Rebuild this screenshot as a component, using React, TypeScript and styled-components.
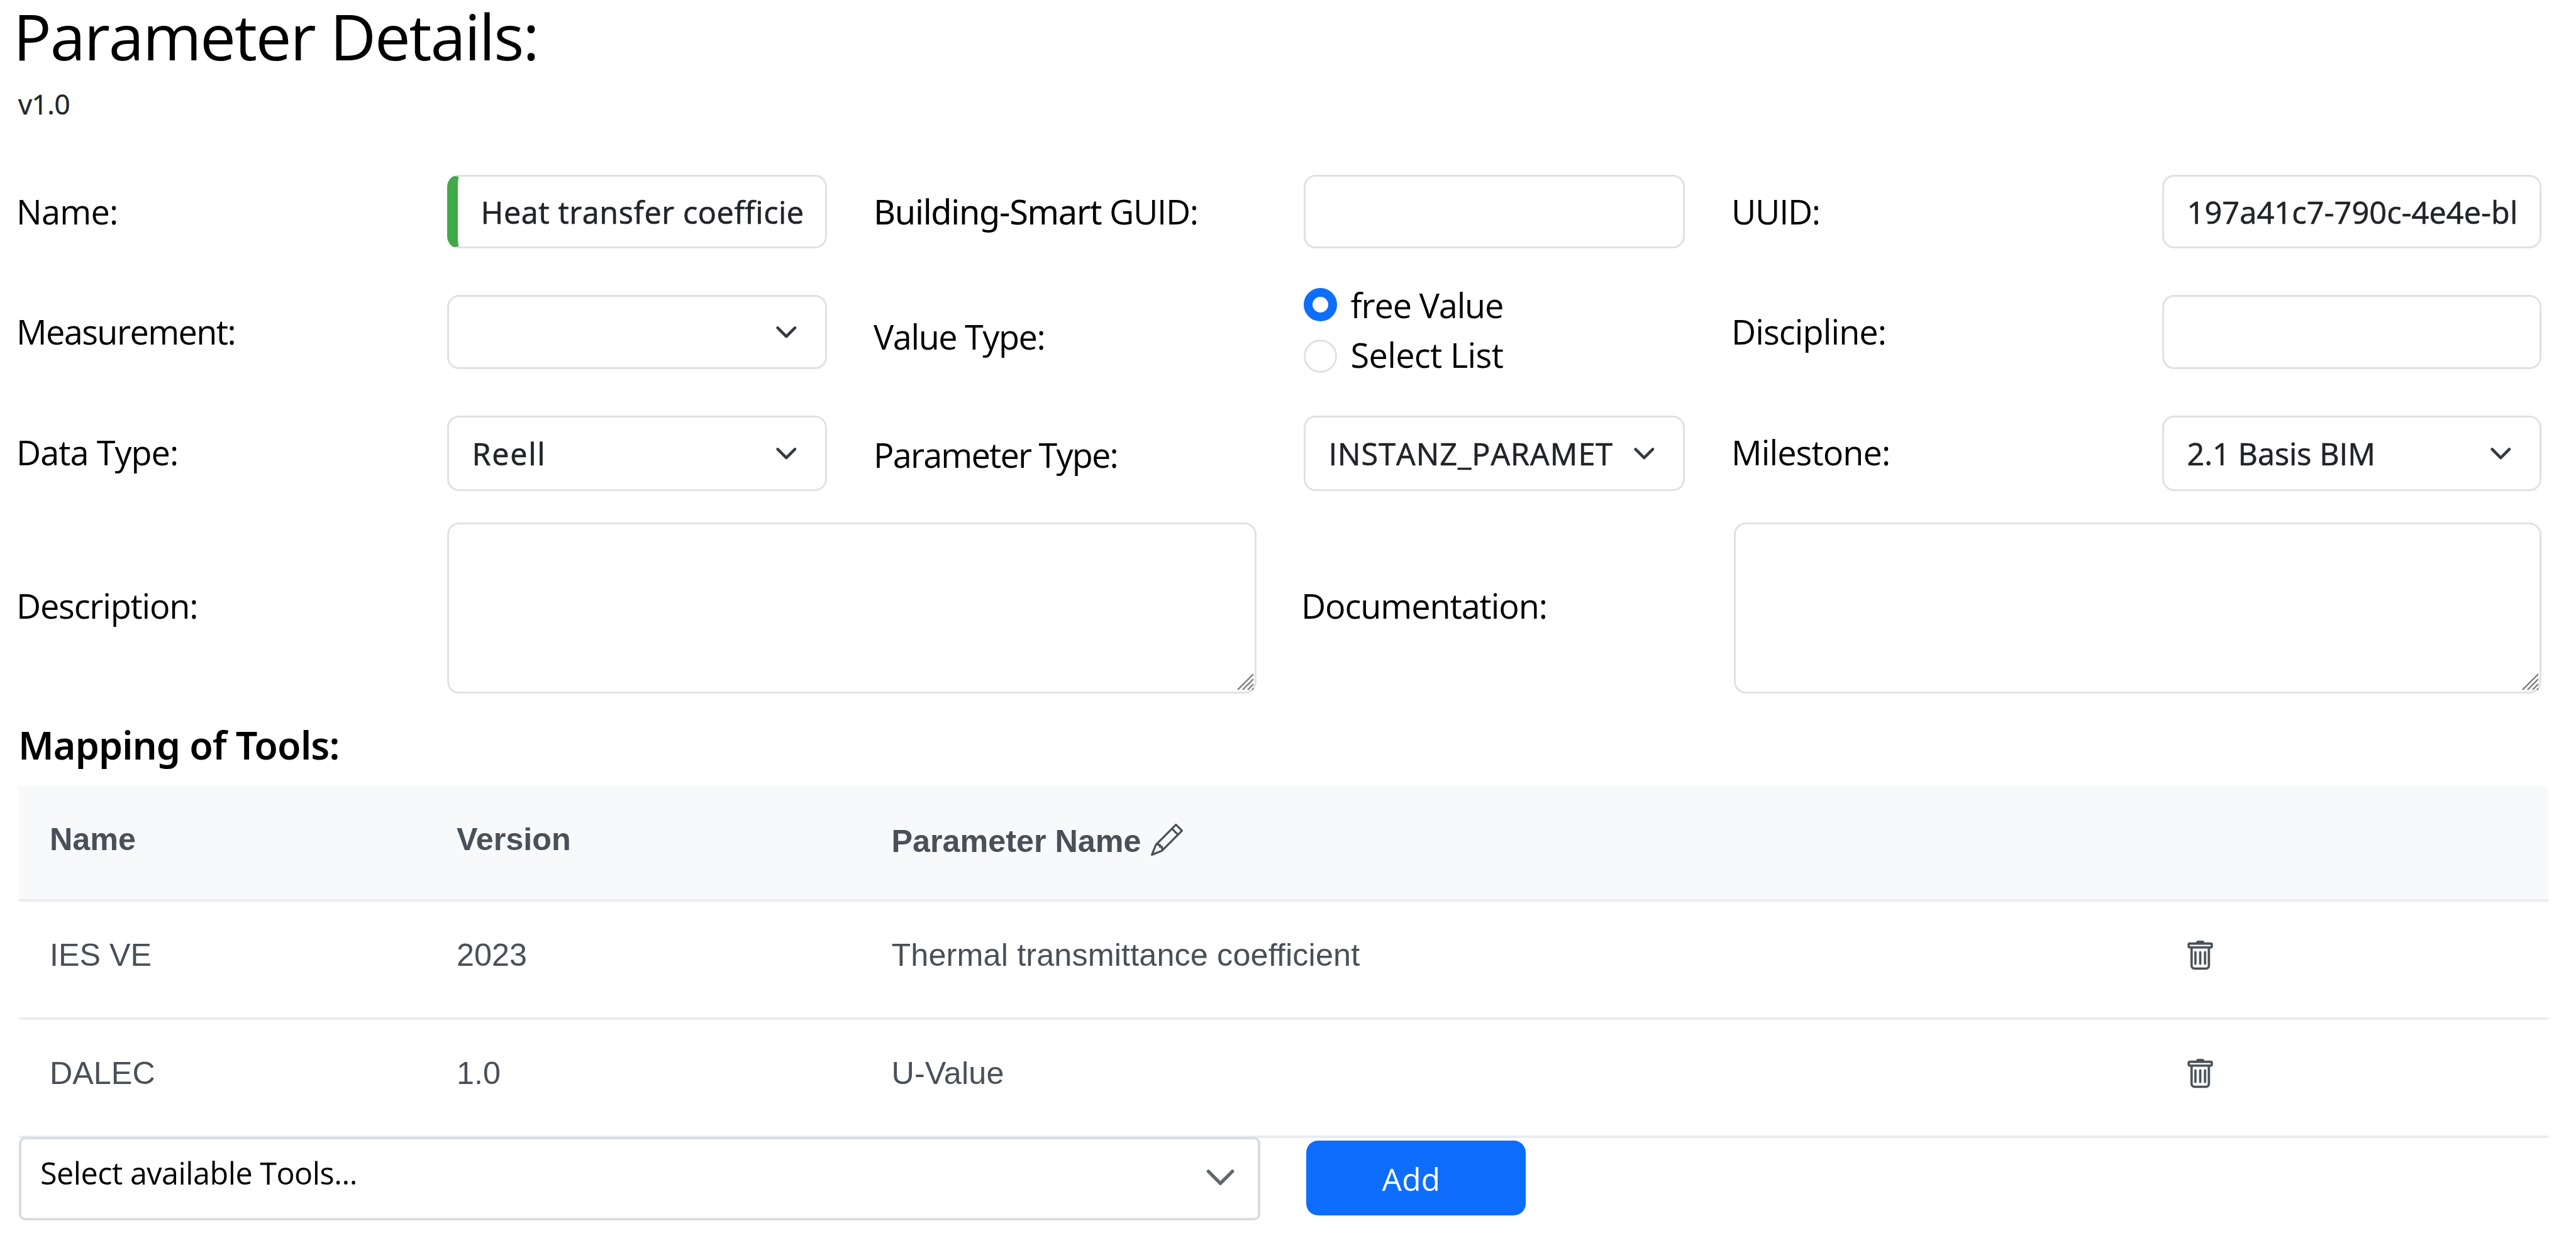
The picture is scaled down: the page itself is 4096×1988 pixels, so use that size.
import React from "react";
import styled, { createGlobalStyle } from "styled-components";
import { BsPencil, BsTrash } from "react-icons/bs";

const GlobalStyle = createGlobalStyle`
  * { box-sizing: border-box; }
  body { margin: 0; background: #fff; overflow: hidden; }
`;

const sans = `"Open Sans", "Noto Sans", sans-serif`;

const Page = styled.main`
  width: 4096px;
  height: 1988px;
  background: #fff;
  color: #000;
  font-family: ${sans};
  display: flex;
  flex-direction: column;
`;

const Header = styled.header`
  padding-left: 21px;
  height: 278px;
`;

const Title = styled.h1`
  margin: 0;
  font-size: 101px;
  font-weight: 400;
  line-height: 114px;
  letter-spacing: -2.1px;
  white-space: nowrap;
`;

const Version = styled.div`
  margin: 21px 0 0 8px;
  font-size: 44px;
  line-height: 60px;
  letter-spacing: -0.4px;
  color: #212529;
  -webkit-text-stroke: 0.5px currentColor;
`;

const Form = styled.form`
  display: flex;
  flex-direction: column;
`;

const FormRow = styled.div<{ $height: number; $gap: number; $wide?: boolean }>`
  display: grid;
  grid-template-columns: ${(p) =>
    p.$wide ? "685px 1287px 71px 688px 1284px" : "685px 604px 74px 684px 606px 74px 685px 603px"};
  grid-template-rows: 100%;
  height: ${(p) => p.$height}px;
  margin: 0 0 ${(p) => p.$gap}px 25.5px;
  align-items: stretch;
`;

const Spacer = styled.span``;

const Label = styled.label<{ $track: number; $drop?: number }>`
  display: flex;
  align-items: center;
  font-size: 54px;
  line-height: 72px;
  padding-bottom: ${(p) => Math.max(0, -(p.$drop ?? -2))}px;
  padding-top: ${(p) => Math.max(0, p.$drop ?? 0)}px;
  padding-left: 0.5px;
  letter-spacing: ${(p) => p.$track}px;
  white-space: nowrap;
`;

const RoundG = styled.span`
  font-family: "Noto Sans", sans-serif;
`;

const Field = styled.div<{ $track?: number; $valid?: boolean }>`
  display: flex;
  align-items: center;
  min-width: 0;
  border: 3px solid #dee2e6;
  border-radius: 19px;
  padding: 0 36px 0 37px;
  color: #212529;
  font-size: 48.5px;
  line-height: 72px;
  letter-spacing: ${(p) => p.$track ?? 0}px;
  -webkit-text-stroke: 0.7px currentColor;
  ${(p) => p.$valid && `border-left: 17px solid #42a948;`}
`;

const SelectField = styled(Field)`
  padding-right: 43px;
  justify-content: space-between;
`;

const Value = styled.span`
  overflow: hidden;
  white-space: nowrap;
`;

const TextArea = styled(Field)`
  align-items: flex-end;
  justify-content: flex-end;
  padding: 0 1px 2px 0;
`;

const Chevron = styled.svg<{ $size: number }>`
  flex: none;
  width: ${(p) => p.$size}px;
  height: ${(p) => p.$size}px;
`;

const Grip = styled.svg`
  width: 27px;
  height: 27px;
`;

const RadioGroup = styled.div`
  display: flex;
  flex-direction: column;
  margin-top: -24px;
`;

const RadioOption = styled.div`
  display: flex;
  align-items: center;
  flex: none;
  height: 79px;
`;

const Radio = styled.span<{ $checked?: boolean }>`
  width: 53px;
  height: 53px;
  flex: none;
  border-radius: 50%;
  margin: ${(p) => (p.$checked ? "0 22px 0 0" : "5px 22px 0 0")};
  border: ${(p) => (p.$checked ? "14px solid #0d6efd" : "3px solid #dee2e6")};
  background: #fff;
`;

const RadioLabel = styled.span<{ $track: number }>`
  font-size: 54px;
  line-height: 72px;
  letter-spacing: ${(p) => p.$track}px;
  white-space: nowrap;
`;

const SectionTitle = styled.h2`
  margin: 40px 0 23px 29px;
  font-family: "Noto Sans", sans-serif;
  font-size: 61px;
  font-weight: 600;
  line-height: 84px;
  letter-spacing: -0.85px;
  color: #000;
`;

const Table = styled.div`
  margin-left: 30px;
  width: 4022px;
  font-family: "Liberation Sans", Arial, sans-serif;
  font-size: 50.3px;
  line-height: 60px;
  color: #495057;
`;

const TableRow = styled.div<{ $head?: boolean }>`
  display: grid;
  grid-template-columns: 647px 691.5px 2056px 1fr;
  align-items: center;
  height: ${(p) => (p.$head ? 184 : 188)}px;
  padding: 0 0 ${(p) => (p.$head ? 11 : 14)}px 49px;
  border-bottom: 4px solid #e9edf1;
  background: ${(p) => (p.$head ? "#f7f9fb" : "#fff")};
  font-weight: ${(p) => (p.$head ? 700 : 400)};
`;

const HeadCell = styled.div`
  display: flex;
  align-items: center;
  gap: 15px;
  padding-top: 6px;

  svg {
    margin-bottom: 5px;
  }
`;

const Cell = styled.div<{ $track?: number }>`
  display: flex;
  align-items: center;
  white-space: nowrap;
  letter-spacing: ${(p) => p.$track ?? 0}px;

  svg {
    margin-top: 3px;
    stroke: currentColor;
    stroke-width: 0.2;
  }
`;

const AddBar = styled.div`
  display: flex;
  align-items: center;
  margin: -2px 0 0 30px;
`;

const ToolSelect = styled.div`
  display: flex;
  align-items: center;
  justify-content: space-between;
  width: 1974px;
  height: 133px;
  border: 4px solid #d9dde1;
  border-radius: 10px;
  padding: 0 34px 0 30px;
  background: #fff;
  font-size: 48.5px;
  line-height: 66px;

  svg {
    margin-bottom: 5px;
  }
`;

const Placeholder = styled.span`
  letter-spacing: -0.5px;
  padding-bottom: 20px;
`;

const AddButton = styled.button`
  width: 349px;
  height: 119px;
  margin: 0 0 2px 73px;
  padding: 2px 15px 0 0;
  border: 0;
  border-radius: 19px;
  background: #0d6efd;
  color: #fff;
  font-family: ${sans};
  font-size: 49.5px;
  line-height: 66px;
  letter-spacing: 0.4px;
`;

const ChevronDown = ({ size = 36.6, color = "#343a40", weight = 2 }: { size?: number; color?: string; weight?: number }) => (
  <Chevron $size={size} viewBox="0 0 16 16" fill="none">
    <path d="m2 5 6 6 6-6" stroke={color} strokeWidth={weight} strokeLinecap="round" strokeLinejoin="round" />
  </Chevron>
);

const ResizeGrip = () => (
  <Grip viewBox="0 0 27 27" stroke="#7a7a7a" strokeWidth="2.4">
    <path d="M1 26 26 1M9 26 26 9M17 26 26 17M24 26 26 24" />
  </Grip>
);

const tools = [
  { name: "IES VE", version: "2023", parameter: "Thermal transmittance coefficient" },
  { name: "DALEC", version: "1.0", parameter: "U-Value" },
];

export default function App() {
  return (
    <Page>
      <GlobalStyle />
      <Header>
        <Title>Parameter Details:</Title>
        <Version>v1.0</Version>
      </Header>
      <Form>
        <FormRow $height={117} $gap={74}>
          <Label $track={-0.72}>Name:</Label>
          <Field $valid $track={0.62}>
            <Value>Heat transfer coefficie</Value>
          </Field>
          <Spacer />
          <Label $track={-1.25}>
            <RoundG>Building-Smart</RoundG>&nbsp;GUID:
          </Label>
          <Field />
          <Spacer />
          <Label $track={-1.3}>UUID:</Label>
          <Field $track={0.2}>
            <Value>197a41c7-790c-4e4e-bl</Value>
          </Field>
        </FormRow>
        <FormRow $height={118} $gap={74}>
          <Label $track={-1.57}>Measurement:</Label>
          <SelectField>
            <Value />
            <ChevronDown />
          </SelectField>
          <Spacer />
          <Label $track={-1.4} $drop={14}>
            Value Type:
          </Label>
          <RadioGroup>
            <RadioOption>
              <Radio $checked />
              <RadioLabel $track={-1.14}>free Value</RadioLabel>
            </RadioOption>
            <RadioOption>
              <Radio />
              <RadioLabel $track={-0.64}>Select List</RadioLabel>
            </RadioOption>
          </RadioGroup>
          <Spacer />
          <Label $track={-0.9}>Discipline:</Label>
          <Field />
        </FormRow>
        <FormRow $height={120} $gap={50}>
          <Label $track={-0.96} $drop={-5}>
            Data Type:
          </Label>
          <SelectField $track={1.8}>
            <Value>Reell</Value>
            <ChevronDown />
          </SelectField>
          <Spacer />
          <Label $track={-1.8} $drop={4}>
            Parameter Type:
          </Label>
          <SelectField $track={1.02}>
            <Value>INSTANZ_PARAMET</Value>
            <ChevronDown />
          </SelectField>
          <Spacer />
          <Label $track={-0.9} $drop={-5}>
            Milestone:
          </Label>
          <SelectField $track={0.05}>
            <Value>2.1 Basis BIM</Value>
            <ChevronDown />
          </SelectField>
        </FormRow>
        <FormRow $height={272} $gap={0} $wide>
          <Label $track={-1.19} $drop={-8}>
            Description:
          </Label>
          <TextArea>
            <ResizeGrip />
          </TextArea>
          <Spacer />
          <Label $track={-1.08} $drop={-8}>
            Documentation:
          </Label>
          <TextArea>
            <ResizeGrip />
          </TextArea>
        </FormRow>
      </Form>
      <SectionTitle>Mapping of Tools:</SectionTitle>
      <Table>
        <TableRow $head>
          <Cell>Name</Cell>
          <Cell>Version</Cell>
          <HeadCell>
            Parameter Name
            <BsPencil size={51} />
          </HeadCell>
        </TableRow>
        {tools.map((tool) => (
          <TableRow key={tool.name}>
            <Cell>{tool.name}</Cell>
            <Cell>{tool.version}</Cell>
            <Cell $track={0.15}>{tool.parameter}</Cell>
            <Cell>
              <BsTrash size={49} />
            </Cell>
          </TableRow>
        ))}
      </Table>
      <AddBar>
        <ToolSelect>
          <Placeholder>Select available Tools...</Placeholder>
          <ChevronDown size={51} color="#5f676f" weight={1.7} />
        </ToolSelect>
        <AddButton type="button">Add</AddButton>
      </AddBar>
    </Page>
  );
}
